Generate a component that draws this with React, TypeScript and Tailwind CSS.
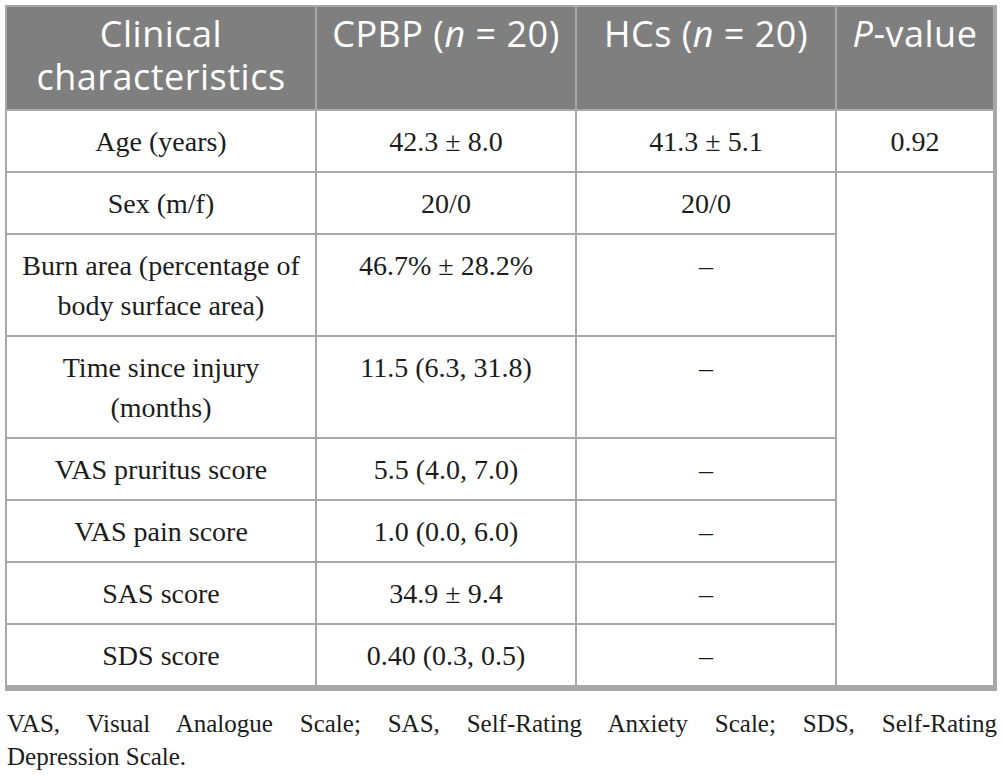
import React from 'react';

interface Row {
  label: string;
  cpbp: string;
  hcs: string;
}

const rows: Row[] = [
  { label: 'Sex (m/f)', cpbp: '20/0', hcs: '20/0' },
  { label: 'Burn area (percentage of body surface area)', cpbp: '46.7% ± 28.2%', hcs: '–' },
  { label: 'Time since injury (months)', cpbp: '11.5 (6.3, 31.8)', hcs: '–' },
  { label: 'VAS pruritus score', cpbp: '5.5 (4.0, 7.0)', hcs: '–' },
  { label: 'VAS pain score', cpbp: '1.0 (0.0, 6.0)', hcs: '–' },
  { label: 'SAS score', cpbp: '34.9 ± 9.4', hcs: '–' },
  { label: 'SDS score', cpbp: '0.40 (0.3, 0.5)', hcs: '–' },
];

const th = 'bg-[#7f7f7f] px-2 pt-[5px] pb-[11px] align-top text-center font-normal text-white border-r-2 border-b-2 border-[#a8a8a8]';
const td = 'px-2 pt-[11px] pb-[9px] align-top text-center border-r-2 border-b-2 border-[#a8a8a8]';

export default function App() {
  return (
    <div className="bg-white text-[#1c1c1c] font-['Liberation_Serif',serif]">
      <table className="ml-[5px] mt-[5px] w-[992px] table-fixed border-separate border-spacing-0 border-2 border-b-4 border-[#a8a8a8] text-[28px] leading-[40px]">
        <colgroup>
          <col className="w-[310px]" />
          <col className="w-[260px]" />
          <col className="w-[260px]" />
          <col className="w-[158px]" />
        </colgroup>
        <thead className="font-['Open_Sans',sans-serif] text-[36px] leading-[43px] tracking-[0.5px]">
          <tr>
            <th className={th}>Clinical characteristics</th>
            <th className={`${th} whitespace-nowrap`}>
              CPBP (<i>n</i> = 20)
            </th>
            <th className={`${th} whitespace-nowrap`}>
              HCs (<i>n</i> = 20)
            </th>
            <th className={`${th} whitespace-nowrap border-r-0`}>
              <i>P</i>-value
            </th>
          </tr>
        </thead>
        <tbody>
          <tr>
            <td className={td}>Age (years)</td>
            <td className={td}>42.3 ± 8.0</td>
            <td className={td}>41.3 ± 5.1</td>
            <td className={`${td} border-r-0`}>0.92</td>
          </tr>
          {rows.map((r, i) => {
            const last = i === rows.length - 1;
            const cls = last ? `${td} border-b-0` : td;
            return (
              <tr key={r.label}>
                <td className={cls}>{r.label}</td>
                <td className={cls}>{r.cpbp}</td>
                <td className={cls}>{r.hcs}</td>
                {i === 0 && <td rowSpan={rows.length} className={`${td} border-r-0 border-b-0`} />}
              </tr>
            );
          })}
        </tbody>
      </table>

      <p className="ml-[7px] mt-[16px] w-[990px] text-[25px] leading-[33px]">
        <span className="block text-justify [text-align-last:justify]">
          VAS, Visual Analogue Scale; SAS, Self-Rating Anxiety Scale; SDS, Self-Rating
        </span>
        <span className="block">Depression Scale.</span>
      </p>
    </div>
  );
}
